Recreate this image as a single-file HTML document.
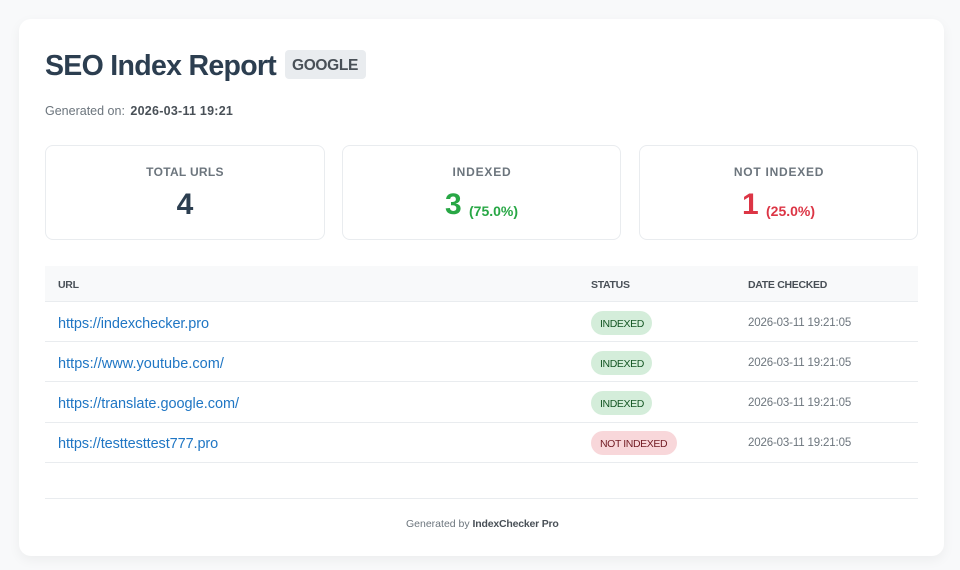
<!DOCTYPE html>
<html><head><meta charset="utf-8"><style>
html,body{margin:0;padding:0;width:960px;height:570px;overflow:hidden;background:#f8f9fa}
body{font-family:"Liberation Sans",sans-serif;position:relative}
.card{position:absolute;left:19px;top:19px;width:925px;height:537px;background:#fff;border-radius:12px;box-shadow:0 4px 12px rgba(0,0,0,.05)}
.t{position:absolute;white-space:nowrap;line-height:20px;height:20px}
.c{transform:translateX(-50%)}
.box{position:absolute;top:145px;height:93px;border:1px solid #e9ecef;border-radius:8px;background:#fff}
.b{position:absolute;left:45px;width:873px;height:1px;background:#e9ecef}
.pill{position:absolute;height:24px;border-radius:12px}
.u{color:#1f76c4;font-size:14.5px;left:58px}
.d{color:#6c757d;font-size:11.5px;left:748px;letter-spacing:-.15px}
.h{color:#495057;font-size:10.5px;font-weight:bold;letter-spacing:-.3px}
.st{font-size:10.5px;letter-spacing:-.4px}
.l{color:#6c757d;font-size:12px;font-weight:bold}
</style></head><body>
<div class="card"></div>
<div class="t" style="left:45px;top:56px;font-size:28.5px;letter-spacing:-.7px;font-weight:bold;color:#2c3e50">SEO Index Report</div>
<div style="position:absolute;left:285px;top:50px;width:81px;height:29px;background:#e9ecef;border-radius:4px"></div>
<div class="t" style="left:292px;top:56px;font-size:15.5px;letter-spacing:-.35px;font-weight:bold;color:#495057">GOOGLE</div>
<div class="t" style="left:45px;top:101px;font-size:12.5px;color:#6c757d">Generated on: <b style="color:#495057;letter-spacing:.25px;margin-left:2px">2026-03-11 19:21</b></div>

<div class="box" style="left:45px;width:278px"></div>
<div class="box" style="left:342px;width:277px"></div>
<div class="box" style="left:639px;width:277px"></div>
<div class="t l c" style="left:185px;top:162px;letter-spacing:.3px">TOTAL URLS</div>
<div class="t l c" style="left:482px;top:162px;letter-spacing:.8px">INDEXED</div>
<div class="t l c" style="left:779px;top:162px;letter-spacing:.75px">NOT INDEXED</div>
<div class="t c" style="left:185px;top:195px;font-size:30px;font-weight:bold;color:#2c3e50">4</div>
<div class="t" style="left:445px;top:195px;font-size:30px;font-weight:bold;color:#28a745">3</div>
<div class="t" style="left:469px;top:201px;font-size:14px;font-weight:bold;color:#28a745">(75.0%)</div>
<div class="t" style="left:742px;top:195px;font-size:30px;font-weight:bold;color:#dc3545">1</div>
<div class="t" style="left:766px;top:201px;font-size:14px;font-weight:bold;color:#dc3545">(25.0%)</div>

<div style="position:absolute;left:45px;top:266px;width:873px;height:35px;background:#f8f9fa"></div>
<div class="b" style="top:301px"></div>
<div class="b" style="top:341px"></div>
<div class="b" style="top:381px"></div>
<div class="b" style="top:422px"></div>
<div class="b" style="top:462px"></div>
<div class="b" style="top:498px"></div>
<div class="t h" style="left:58px;top:275px">URL</div>
<div class="t h" style="left:591px;top:275px">STATUS</div>
<div class="t h" style="left:748px;top:275px">DATE CHECKED</div>

<div class="t u" style="top:314px;letter-spacing:-.09px">https://indexchecker.pro</div>
<div class="t u" style="top:354px;letter-spacing:.03px">https://www.youtube.com/</div>
<div class="t u" style="top:394px;letter-spacing:-.04px">https://translate.google.com/</div>
<div class="t u" style="top:434px;letter-spacing:-.1px">https://testtesttest777.pro</div>

<div class="pill" style="left:591px;top:311px;width:61px;background:#d4edda"></div>
<div class="pill" style="left:591px;top:351px;width:61px;background:#d4edda"></div>
<div class="pill" style="left:591px;top:391px;width:61px;background:#d4edda"></div>
<div class="pill" style="left:591px;top:431px;width:86px;background:#f8d7da"></div>
<div class="t st" style="left:600px;top:314px;color:#155724">INDEXED</div>
<div class="t st" style="left:600px;top:354px;color:#155724">INDEXED</div>
<div class="t st" style="left:600px;top:394px;color:#155724">INDEXED</div>
<div class="t st" style="left:600px;top:434px;color:#721c24">NOT INDEXED</div>

<div class="t d" style="top:313px">2026-03-11 19:21:05</div>
<div class="t d" style="top:353px">2026-03-11 19:21:05</div>
<div class="t d" style="top:393px">2026-03-11 19:21:05</div>
<div class="t d" style="top:433px">2026-03-11 19:21:05</div>

<div class="t" style="left:406px;top:514px;font-size:10.5px;color:#6c757d">Generated by <b style="color:#495057;letter-spacing:-.2px">IndexChecker Pro</b></div>
</body></html>
